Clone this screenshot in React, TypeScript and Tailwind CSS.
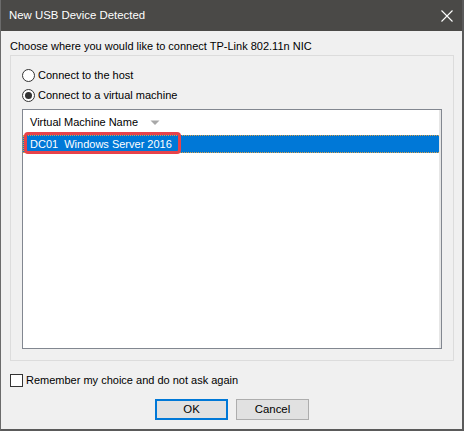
import React from "react";

export default function App() {
  const font = { fontFamily: '"Liberation Sans", Arial, sans-serif' };
  return (
    <div
      className="w-[464px] h-[431px] bg-[#f0f0f0] flex flex-col border-l border-l-[#6b6b6b] border-r-2 border-r-[#5a5a5a] border-b-2 border-b-[#5a5a5a] text-[11px] text-black overflow-hidden"
      style={font}
    >
      {/* Title bar */}
      <div className="h-[31px] bg-[#4a4947] flex items-center justify-between shrink-0">
        <span className="ml-[8px] text-white text-[11.4px]">New USB Device Detected</span>
        <svg width="12" height="12" viewBox="0 0 12 12" className="mr-[9px]">
          <path d="M0.5 0.5 L11.5 11.5 M11.5 0.5 L0.5 11.5" stroke="#ffffff" strokeWidth="1.1" />
        </svg>
      </div>

      {/* Body */}
      <div className="flex flex-col pl-[8px]">
        <div className="mt-[7px] h-[16px] leading-[16px] ml-[1px]">
          Choose where you would like to connect TP-Link 802.11n NIC
        </div>

        {/* Group box */}
        <div className="mt-[1px] ml-[1px] w-[444px] border border-[#dcdcdc] flex flex-col pt-[9px] pb-[11px]">
          <label className="h-[20px] flex items-center ml-[11px]">
            <span className="w-[13px] h-[13px] rounded-full border border-[#333333] bg-white" />
            <span className="ml-[3px]">Connect to the host</span>
          </label>
          <label className="h-[20px] flex items-center ml-[11px]">
            <span className="w-[13px] h-[13px] rounded-full border border-[#333333] bg-white flex items-center justify-center">
              <span className="w-[7px] h-[7px] rounded-full bg-[#333333]" />
            </span>
            <span className="ml-[3px]">Connect to a virtual machine</span>
          </label>

          {/* List */}
          <div className="relative mt-[4px] ml-[11px] w-[420px] h-[240px] border border-[#828790] bg-white flex flex-col">
            <div className="h-[25px] flex items-center pl-[7px] shrink-0">
              <span>Virtual Machine Name</span>
              <svg width="10" height="6" viewBox="0 0 10 6" className="ml-[12px]">
                <path d="M0.5 0.5 L9.5 0.5 L5 5 Z" fill="#a8a8a8" />
              </svg>
            </div>
            <div className="h-[18px] bg-[#0078d7] text-white flex items-center pl-[7px] outline-1 outline-dotted outline-[#d6a04a] -outline-offset-1">
              <span className="whitespace-pre">DC01  Windows Server 2016</span>
            </div>
            <div className="absolute left-[1px] top-[22px] w-[157px] h-[22px] border-[3px] border-[#e8434a] rounded-[4px]" />
            <div className="absolute right-0 top-0 bottom-0 w-[2px] bg-[#e6e6e6]" />
          </div>
        </div>

        {/* Checkbox */}
        <label className="mt-[13px] ml-[1px] h-[13px] flex items-center">
          <span className="w-[13px] h-[13px] border border-[#333333] bg-white" />
          <span className="ml-[3px]">Remember my choice and do not ask again</span>
        </label>

        {/* Buttons */}
        <div className="mt-[12px] flex ml-[146px] gap-[8px]">
          <button className="w-[73px] h-[21px] bg-[#e1e1e1] border-2 border-[#0078d7] flex items-center justify-center text-[11.4px]">
            OK
          </button>
          <button className="w-[73px] h-[21px] bg-[#e1e1e1] border border-[#adadad] flex items-center justify-center text-[11.4px]">
            Cancel
          </button>
        </div>
      </div>
    </div>
  );
}
